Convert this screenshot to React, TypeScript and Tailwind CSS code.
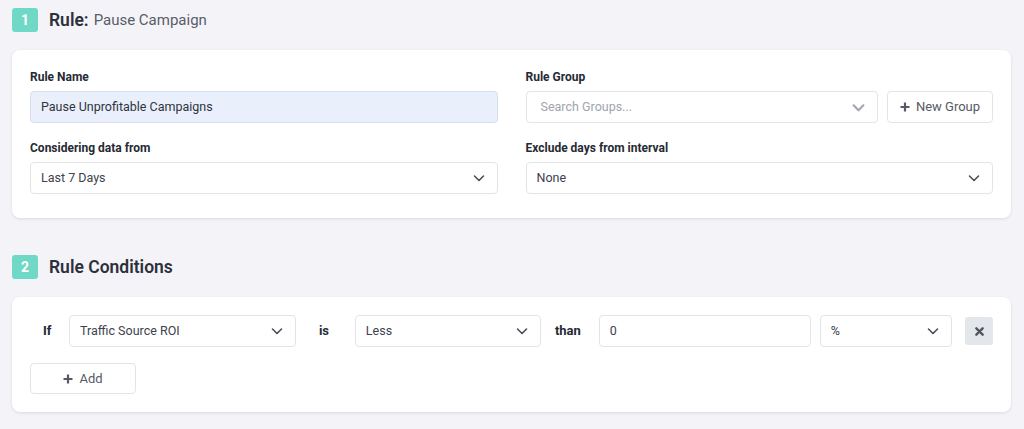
const Chevron = ({ light = false }: { light?: boolean }) => (
  <svg
    className={light ? "w-[13px] h-[13px] text-[#a3a7b0]" : "w-[12px] h-[12px] text-[#4a4f5a]"}
    viewBox="0 0 12 12"
    fill="none"
    stroke="currentColor"
    strokeWidth={light ? 2 : 1.6}
    strokeLinecap="round"
    strokeLinejoin="round"
  >
    <path d="M1.5 4l4.5 4.5L10.5 4" />
  </svg>
);

const Plus = () => (
  <svg className="w-[10px] h-[10px] text-[#555a64]" viewBox="0 0 10 10" fill="none" stroke="currentColor" strokeWidth="2.2">
    <path d="M5 0.5v9M0.5 5h9" />
  </svg>
);

const Badge = ({ n }: { n: string }) => (
  <div className="w-[26px] h-[24px] rounded-[3px] bg-[#6fd8c6] flex items-center justify-center text-white text-[14px] font-bold">
    {n}
  </div>
);

const Select = ({ value, className = "", placeholder = false }: { value: string; className?: string; placeholder?: boolean }) => (
  <div
    className={`h-[32px] flex items-center justify-between bg-white border border-[#e2e4e9] rounded-[4px] pr-[12px] ${className}`}
  >
    <span className={placeholder ? "text-[12.5px] text-[#a0a4ad] pl-[14px]" : "text-[12.5px] text-[#3d424d] pl-[10px]"}>{value}</span>
    <Chevron light={placeholder} />
  </div>
);

const Label = ({ children }: { children: string }) => (
  <div className="text-[12px] font-bold text-[#262a33] mb-[6px] leading-[16px]">{children}</div>
);

export default function App() {
  return (
    <div className="w-[1024px] h-[429px] bg-[#f4f4f8] px-[12px] pt-[8px] overflow-hidden" style={{ fontFamily: "Roboto, 'Liberation Sans', sans-serif" }}>
      {/* section 1 */}
      <div className="flex items-center h-[24px]">
        <Badge n="1" />
        <span className="ml-[11px] text-[17.5px] font-semibold text-[#2c303b]">Rule:</span>
        <span className="ml-[5px] text-[15px] text-[#585d68]">Pause Campaign</span>
      </div>

      <div className="mt-[18px] w-[999px] bg-white rounded-[8px] shadow-[0_1px_3px_rgba(30,35,60,0.12)] px-[18px] pt-[19px] pb-[24px]">
        <div className="grid grid-cols-2 gap-x-[28px]">
          <div>
            <Label>Rule Name</Label>
            <div className="h-[32px] flex items-center bg-[#e9f0fc] border border-[#d6deeb] rounded-[4px] pl-[10px] text-[12.5px] text-[#2f333d]">
              Pause Unprofitable Campaigns
            </div>
          </div>
          <div>
            <Label>Rule Group</Label>
            <div className="flex gap-[9px]">
              <Select value="Search Groups..." placeholder className="flex-1" />
              <button className="h-[32px] w-[106px] flex items-center justify-center gap-[6px] bg-white border border-[#e2e4e9] rounded-[4px] text-[13px] text-[#555a64]">
                <Plus />
                New Group
              </button>
            </div>
          </div>
        </div>
        <div className="grid grid-cols-2 gap-x-[28px] mt-[17px]">
          <div>
            <Label>Considering data from</Label>
            <Select value="Last 7 Days" />
          </div>
          <div>
            <Label>Exclude days from interval</Label>
            <Select value="None" />
          </div>
        </div>
      </div>

      {/* section 2 */}
      <div className="mt-[37px] flex items-center h-[24px]">
        <Badge n="2" />
        <span className="ml-[11px] text-[17.5px] font-semibold text-[#2c303b]">Rule Conditions</span>
      </div>

      <div className="mt-[18px] w-[999px] bg-white rounded-[8px] shadow-[0_1px_3px_rgba(30,35,60,0.12)] px-[18px] py-[18px]">
        <div className="flex items-center h-[32px]">
          <span className="ml-[13px] w-[8px] text-[13px] font-bold text-[#262a33]">If</span>
          <Select value="Traffic Source ROI" className="ml-[18px] w-[228px]" />
          <span className="ml-[23px] w-[11px] text-[13px] font-bold text-[#262a33]">is</span>
          <Select value="Less" className="ml-[25px] w-[187px]" />
          <span className="ml-[14px] w-[27px] text-[13px] font-bold text-[#262a33]">than</span>
          <div className="ml-[17px] w-[213px] h-[32px] flex items-center bg-white border border-[#e2e4e9] rounded-[4px] pl-[10px] text-[12.5px] text-[#3d424d]">
            0
          </div>
          <Select value="%" className="ml-[9px] w-[133px]" />
          <button className="ml-[13px] w-[28px] h-[28px] rounded-[3px] bg-[#e3e6eb] flex items-center justify-center">
            <svg className="w-[9px] h-[9px] text-[#50555f]" viewBox="0 0 10 10" fill="none" stroke="currentColor" strokeWidth="2.6" strokeLinecap="round">
              <path d="M1.5 1.5l7 7M8.5 1.5l-7 7" />
            </svg>
          </button>
        </div>
        <button className="mt-[16px] h-[31px] w-[106px] flex items-center justify-center gap-[6px] bg-white border border-[#e2e4e9] rounded-[4px] text-[13px] text-[#555a64]">
          <Plus />
          Add
        </button>
      </div>
    </div>
  );
}
